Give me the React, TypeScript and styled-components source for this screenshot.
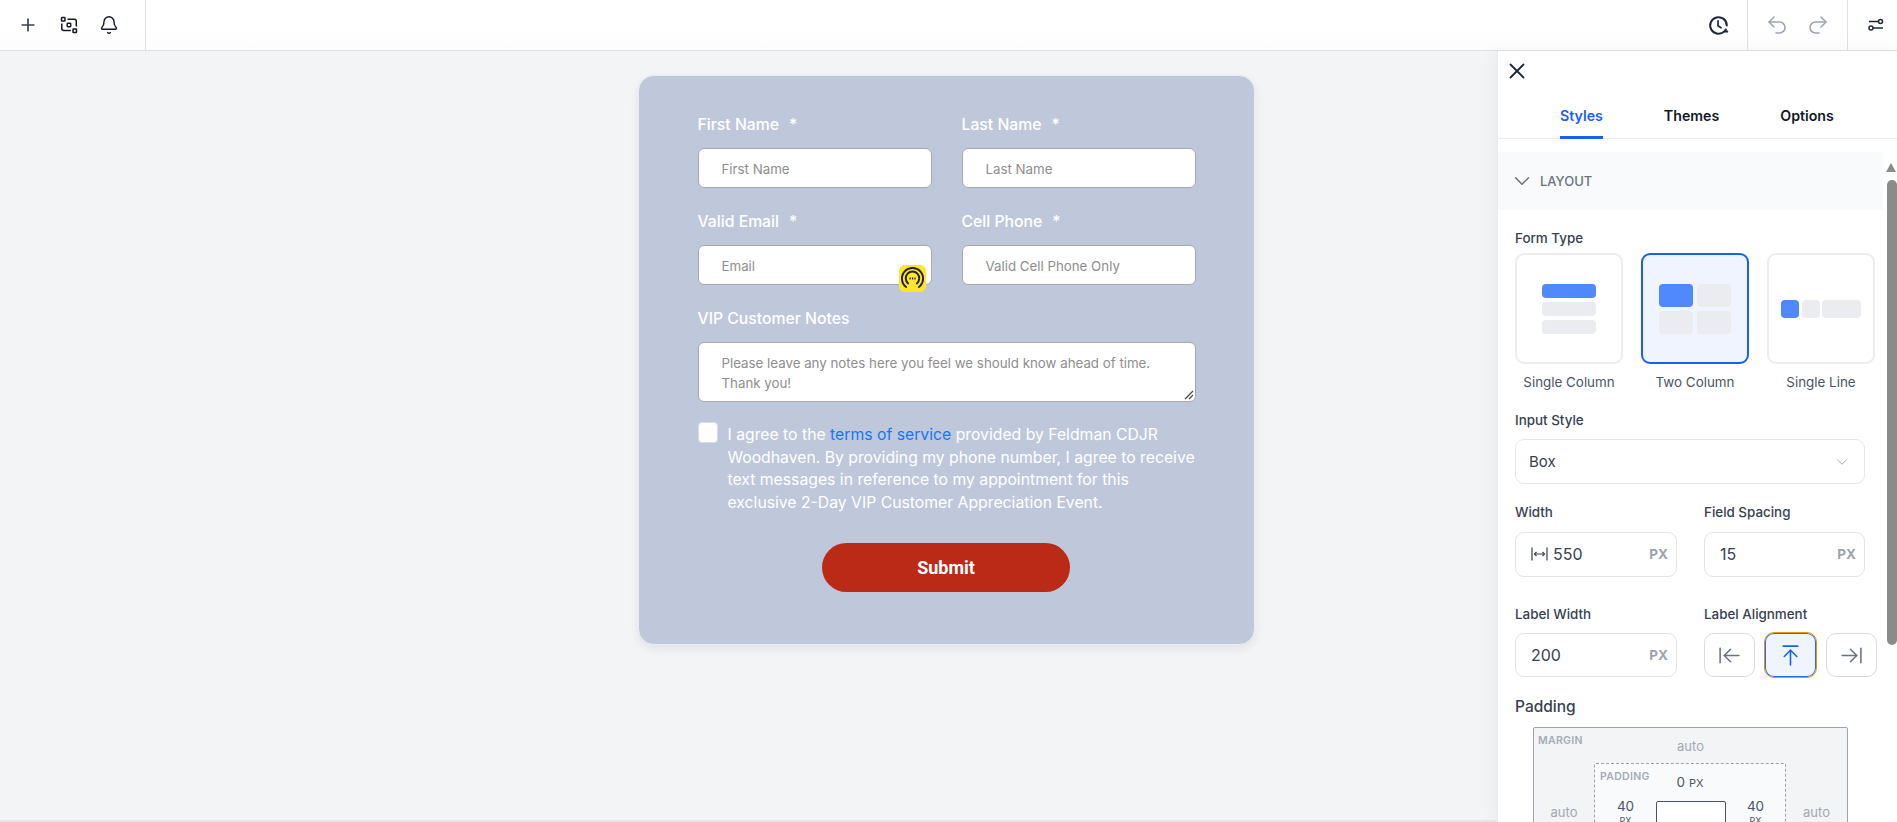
import React from "react";
import styled, { createGlobalStyle } from "styled-components";
import { ArrowLeftToLine, ArrowRightToLine, ArrowUpToLine, Bell, ChevronDown, Plus, Redo2, Undo2, X } from "lucide-react";

const GlobalStyle = createGlobalStyle`
  html, body {
    margin: 0;
    height: 100%;
    overflow: hidden;
    background: #f3f4f6;
    font-family: Inter, "Liberation Sans", sans-serif;
  }
  * { box-sizing: border-box; }
`;

const Page = styled.div`
  height: 822px;
  display: flex;
  flex-direction: column;
  overflow: hidden;
`;

const TopBar = styled.header`
  flex: 0 0 51px;
  display: flex;
  justify-content: space-between;
  background: linear-gradient(#fff, #fff 60%, #fcfcfc);
  border-bottom: 1px solid #dfe0e3;
`;

const BarGroup = styled.div`
  display: flex;
  align-items: center;
`;

const RightTools = styled.div`
  display: flex;
  align-items: stretch;
`;

const LeftTools = styled(BarGroup)`
  width: 146px;
  padding-left: 18px;
  gap: 21.5px;
  border-right: 1px solid #dfe0e3;
  color: #111827;
`;

const HistoryTool = styled(BarGroup)`
  width: 54px;
  padding-right: 18px;
  justify-content: flex-end;
  color: #1f2937;
`;

const UndoTools = styled(BarGroup)`
  width: 101px;
  padding-left: 17px;
  gap: 17px;
  border-left: 1px solid #dfe0e3;
  border-right: 1px solid #dfe0e3;
  color: #9ca3af;
`;

const SettingsTool = styled(BarGroup)`
  width: 49px;
  padding-left: 20px;
  color: #1f2937;
`;

const Workspace = styled.div`
  flex: 1;
  position: relative;
  min-height: 0;
  display: flex;
  justify-content: center;
  align-items: flex-start;
  padding: 24px 5px 0 0;
  border-bottom: 2px solid #e5e7eb;
`;

const FormCard = styled.form`
  width: 617px;
  height: 570px;
  padding: 37px 59px 0;
  background: #bfc7db;
  border: 1px solid #e9ebf1;
  border-radius: 16px;
  box-shadow: 0 4px 10px rgba(30, 40, 70, 0.08);
`;

const FieldRow = styled.div`
  display: grid;
  grid-template-columns: 234px 234px;
  gap: 30px;
  margin-bottom: 22px;
`;

const Field = styled.div`
  position: relative;
`;

const FieldLabel = styled.label`
  display: block;
  height: 24px;
  line-height: 24px;
  margin-bottom: 11px;
  color: #fff;
  font-size: 15.75px;
  font-weight: 500;
`;

const Star = styled.span`
  margin-left: 10px;
`;

const TextInput = styled.div`
  height: 40px;
  padding: 2px 0 0 23px;
  display: flex;
  align-items: center;
  background: #fff;
  border: 1px solid #a6a8ad;
  border-radius: 6px;
  color: #8e8e8e;
  font-size: 13.3px;
`;

const TextAreaBox = styled.div`
  position: relative;
  width: 498px;
  height: 60px;
  padding: 10px 23px;
  background: #fff;
  border: 1px solid #a6a8ad;
  border-radius: 6px;
  color: #8e8e8e;
  font-size: 13.3px;
  line-height: 20px;
`;

const ResizeGrip = styled.svg`
  position: absolute;
  right: 1px;
  bottom: 1px;
`;

const Badge = styled.div`
  position: absolute;
  left: 201px;
  top: 55px;
  width: 27px;
  height: 27px;
  display: flex;
  align-items: center;
  justify-content: center;
  background: #fde62b;
  border-radius: 6px;
`;

const ConsentRow = styled.div`
  display: flex;
  gap: 10px;
  margin-top: 20px;
`;

const Checkbox = styled.span`
  flex: 0 0 20px;
  height: 21px;
  background: #fff;
  border: 1px solid #d9dde8;
  border-radius: 4px;
`;

const ConsentText = styled.p`
  margin: 0;
  flex: 0 0 473px;
  padding-top: 2px;
  color: #fff;
  font-size: 15.75px;
  line-height: 22.7px;
`;

const TermsLink = styled.span`
  color: #1577f5;
`;

const SubmitRow = styled.div`
  display: flex;
  justify-content: center;
  margin-top: 28px;
`;

const SubmitButton = styled.button`
  width: 248px;
  height: 49px;
  border: 0;
  border-radius: 25px;
  background: #bb2917;
  color: #fff;
  font-family: Roboto, sans-serif;
  font-size: 18px;
  font-weight: 700;
`;

const SidePanel = styled.aside`
  position: absolute;
  top: 0;
  right: 0;
  bottom: -2px;
  width: 400px;
  overflow: hidden;
  background: #fff;
  border-left: 1px solid #e9eaee;
  box-shadow: -6px 0 14px rgba(0, 0, 0, 0.03);
`;

const CloseRow = styled.div`
  height: 39px;
  padding: 7px 0 0 6px;
  color: #1f2937;
`;

const Tabs = styled.nav`
  height: 49px;
  padding: 17px 0 0 62px;
  display: flex;
  gap: 61px;
  border-bottom: 1px solid #eceef1;
`;

const Tab = styled.div<{ $active?: boolean }>`
  height: 32px;
  line-height: 18px;
  color: ${(p) => (p.$active ? "#1a5ff0" : "#111827")};
  font-size: 14.2px;
  font-weight: 600;
  border-bottom: ${(p) => (p.$active ? "3px solid #1a5ff0" : "0")};
`;

const ScrollArea = styled.div`
  position: relative;
  margin-top: 13px;
  padding-right: 14px;
`;

const ScrollTrack = styled.div`
  position: absolute;
  top: 0;
  right: 0;
  width: 11px;
  height: 100%;
`;

const ScrollArrow = styled.div`
  margin: 11px 0 0 0;
  width: 0;
  height: 0;
  border-left: 5.5px solid transparent;
  border-right: 5.5px solid transparent;
  border-bottom: 9px solid #8b8b8b;
`;

const ScrollThumb = styled.div`
  width: 10px;
  margin: 8px 0 0 1px;
  height: 465px;
  background: #8b8b8b;
  border-radius: 5px;
`;

const SectionHeader = styled.div`
  height: 58px;
  padding-left: 11px;
  display: flex;
  align-items: center;
  gap: 5px;
  background: #f9fafb;
  color: #6b7280;
  font-size: 13px;
  font-weight: 500;
`;

const SectionBody = styled.div`
  padding: 18px 0 0 17px;
`;

const ControlLabel = styled.div<{ $large?: boolean; $top?: number }>`
  margin-top: ${(p) => p.$top ?? 0}px;
  color: #374151;
  font-size: ${(p) => (p.$large ? 15.5 : 13.4)}px;
  font-weight: 500;
  line-height: 20px;
`;

const TypeRow = styled.div`
  display: grid;
  grid-template-columns: repeat(3, 108px);
  gap: 18px;
  margin-top: 5px;
`;

const TypeOption = styled.div`
  display: flex;
  flex-direction: column;
  align-items: center;
  gap: 9px;
  color: #4b5563;
  font-size: 13.4px;
  line-height: 18px;
`;

const TypeCard = styled.div<{ $active?: boolean }>`
  width: 108px;
  height: 111px;
  display: flex;
  align-items: center;
  justify-content: center;
  background: ${(p) => (p.$active ? "#eff4fe" : "#fff")};
  border: 2px solid ${(p) => (p.$active ? "#1a5ff0" : "#ecedf1")};
  border-radius: 9px;
`;

const SelectBox = styled.div`
  width: 350px;
  height: 45px;
  margin-top: 9px;
  padding: 0 13px;
  display: flex;
  align-items: center;
  justify-content: space-between;
  border: 1px solid #e5e7eb;
  border-radius: 9px;
  color: #374151;
  font-size: 15px;
`;

const TwoCols = styled.div<{ $top: number }>`
  display: grid;
  grid-template-columns: 162px 161px;
  gap: 27px;
  margin-top: ${(p) => p.$top}px;
`;

const NumberInput = styled.div<{ $tight?: boolean }>`
  height: ${(p) => (p.$tight ? 44 : 45)}px;
  margin-top: ${(p) => (p.$tight ? 9 : 10)}px;
  padding: 0 8px 1px 15px;
  display: flex;
  align-items: center;
  justify-content: space-between;
  border: 1px solid #e2e4ea;
  border-radius: 9px;
  color: #374151;
  font-size: 16px;
`;

const InputValue = styled.span`
  display: flex;
  align-items: center;
  gap: 5px;
`;

const Unit = styled.span`
  color: #9ca3af;
  font-size: 13.5px;
  font-weight: 700;
`;

const AlignRow = styled.div`
  display: flex;
  align-items: center;
  gap: 9px;
  margin-top: 8px;
`;

const AlignButton = styled.div<{ $active?: boolean }>`
  flex: 0 0 ${(p) => (p.$active ? 53 : 51)}px;
  height: ${(p) => (p.$active ? 46 : 44)}px;
  display: flex;
  align-items: center;
  justify-content: center;
  background: ${(p) => (p.$active ? "#eff4fe" : "#fff")};
  border: 1px solid ${(p) => (p.$active ? "#e8930c" : "#d9dbe4")};
  box-shadow: ${(p) => (p.$active ? "inset 0 0 0 1px #2a6bf0" : "none")};
  border-radius: 10px;
  color: ${(p) => (p.$active ? "#1a5ff0" : "#6b7280")};
`;

const MarginBox = styled.div`
  width: 315px;
  height: 200px;
  margin: 10px 0 0 18px;
  padding-top: 7px;
  background: #f3f4f6;
  border: 1px solid #9ca3af;
  border-radius: 2px;
`;

const BoxTitle = styled.div<{ $inset: number }>`
  height: 12px;
  padding-left: ${(p) => p.$inset}px;
  line-height: 12px;
  color: #a5abb8;
  font-size: 10.5px;
  font-weight: 600;
  letter-spacing: 0.3px;
`;

const AutoTop = styled.div`
  margin-top: -9px;
  text-align: center;
  color: #a3a8b3;
  font-size: 13px;
  line-height: 16px;
`;

const MarginMiddle = styled.div`
  display: grid;
  grid-template-columns: 60px 192px 61px;
  margin-top: 9px;
`;

const AutoSide = styled.div`
  padding-top: 41px;
  text-align: center;
  color: #a3a8b3;
  font-size: 13px;
  line-height: 16px;
`;

const PaddingBox = styled.div`
  height: 100px;
  padding-top: 7px;
  background: #f9fafb;
  border: 1px dashed #9ca3af;
  border-radius: 2px;
`;

const ZeroValue = styled.div`
  margin-top: -8px;
  text-align: center;
  color: #4b5563;
  font-size: 13.5px;
  line-height: 14px;
  small {
    font-size: 11px;
  }
`;

const PaddingMiddle = styled.div`
  display: grid;
  grid-template-columns: 61px 70px 59px;
  align-items: start;
  margin-top: 8px;
`;

const SideValue = styled.div`
  text-align: center;
  color: #4b5563;
  font-size: 13.5px;
  line-height: 16px;
  small {
    display: block;
    margin-top: 2px;
    font-size: 9px;
    line-height: 10px;
  }
`;

const ContentBox = styled.div`
  height: 24px;
  margin-top: 3px;
  background: #fff;
  border: 1px solid #4b5563;
  border-radius: 2px;
`;

const Shade = styled.rect<{ $on?: boolean }>`
  fill: ${(p) => (p.$on ? "#5089fd" : "#ebecef")};
`;

const GroupIcon = () => (
  <svg width="18" height="18" viewBox="0 0 18 18" fill="none" stroke="currentColor" strokeWidth="1.5">
    <rect x="1.5" y="1.5" width="3.5" height="3.5" rx=".6" />
    <rect x="7.2" y="7.2" width="3.5" height="3.5" rx=".6" />
    <rect x="13" y="13" width="3.5" height="3.5" rx=".6" />
    <path d="M7.5 3.2h6.8a2 2 0 0 1 2 2v5.3M1.8 7.5v5a2 2 0 0 0 2 2h7" />
  </svg>
);

const HistoryIcon = () => (
  <svg width="21" height="21" viewBox="0 0 21 21" fill="none" stroke="currentColor" strokeWidth="2" strokeLinecap="round">
    <path d="M18.8 10.5a8.3 8.3 0 1 0-2.5 5.9" />
    <path d="M10 5.8v5l3 2" strokeWidth="1.7" />
    <path d="M15.4 13.8h4.2l-2.1 3z" fill="currentColor" strokeWidth="1" transform="rotate(180 17.5 15.4)" />
  </svg>
);

const SlidersIcon = () => (
  <svg width="16" height="16" viewBox="0 0 16 16" fill="none" stroke="currentColor" strokeWidth="1.5">
    <circle cx="12.5" cy="4.5" r="2" />
    <circle cx="3" cy="11" r="2" />
    <path d="M1 4.5h9.5M5 11h10" />
  </svg>
);

const WidthIcon = () => (
  <svg width="17" height="16" viewBox="0 0 17 16" fill="none" stroke="#374151" strokeWidth="1.2">
    <path d="M1 1.5v13M16 1.5v13M3.5 8h10" />
    <path d="M5.5 6 3.5 8l2 2M11.5 6l2 2-2 2" />
  </svg>
);

const BadgeIcon = () => (
  <svg width="25" height="25" viewBox="0 0 23 23" fill="none" stroke="#222" strokeWidth="1.8" strokeLinecap="round">
    <path d="M5.7 19.3a9.7 9.7 0 1 1 11.6 0" />
    <path d="M7.5 16a6.2 6.2 0 1 1 8 0" />
    <path d="M8.7 11.5h5.6" strokeDasharray="1.2 1.1" strokeLinecap="butt" />
  </svg>
);

const SingleColumnArt = () => (
  <svg width="56" height="52" viewBox="0 0 56 52">
    <Shade $on x="1" y="1" width="54" height="14" rx="4" />
    <Shade x="1" y="19" width="54" height="14" rx="4" />
    <Shade x="1" y="37" width="54" height="14" rx="4" />
  </svg>
);

const TwoColumnArt = () => (
  <svg width="72" height="50" viewBox="0 0 72 50">
    <Shade $on x="0" y="0" width="34" height="23" rx="4" />
    <Shade x="38" y="0" width="34" height="23" rx="4" />
    <Shade x="0" y="27" width="34" height="23" rx="4" />
    <Shade x="38" y="27" width="34" height="23" rx="4" />
  </svg>
);

const SingleLineArt = () => (
  <svg width="80" height="18" viewBox="0 0 80 18">
    <Shade $on x="0" y="0" width="18" height="18" rx="4" />
    <Shade x="21" y="0" width="18" height="18" rx="4" />
    <Shade x="41" y="0" width="39" height="18" rx="4" />
  </svg>
);

function RequiredLabel({ text }: { text: string }) {
  return <FieldLabel>{text}<Star>*</Star></FieldLabel>;
}

export default function App() {
  return (
    <Page>
      <GlobalStyle />
      <TopBar>
        <LeftTools>
          <Plus size={20} strokeWidth={2} color="#374151" />
          <GroupIcon />
          <Bell size={20} strokeWidth={1.7} />
        </LeftTools>
        <RightTools>
          <HistoryTool><HistoryIcon /></HistoryTool>
          <UndoTools>
            <Undo2 size={24} strokeWidth={1.5} />
            <Redo2 size={24} strokeWidth={1.5} />
          </UndoTools>
          <SettingsTool><SlidersIcon /></SettingsTool>
        </RightTools>
      </TopBar>
      <Workspace>
        <FormCard>
          <FieldRow>
            <Field>
              <RequiredLabel text="First Name" />
              <TextInput>First Name</TextInput>
            </Field>
            <Field>
              <RequiredLabel text="Last Name" />
              <TextInput>Last Name</TextInput>
            </Field>
          </FieldRow>
          <FieldRow>
            <Field>
              <RequiredLabel text="Valid Email" />
              <TextInput>Email</TextInput>
              <Badge><BadgeIcon /></Badge>
            </Field>
            <Field>
              <RequiredLabel text="Cell Phone" />
              <TextInput>Valid Cell Phone Only</TextInput>
            </Field>
          </FieldRow>
          <FieldLabel>VIP Customer Notes</FieldLabel>
          <TextAreaBox>
            Please leave any notes here you feel we should know ahead of time. Thank you!
            <ResizeGrip width="10" height="10" viewBox="0 0 10 10" stroke="#444" strokeWidth="1.2">
              <path d="M1 9 9 1M5 9l4-4" />
            </ResizeGrip>
          </TextAreaBox>
          <ConsentRow>
            <Checkbox />
            <ConsentText>
              I agree to the <TermsLink>terms of service</TermsLink> provided by Feldman CDJR Woodhaven. By providing my phone number, I agree to receive text messages in reference to my appointment for this exclusive 2-Day VIP Customer Appreciation Event.
            </ConsentText>
          </ConsentRow>
          <SubmitRow>
            <SubmitButton type="button">Submit</SubmitButton>
          </SubmitRow>
        </FormCard>
        <SidePanel>
          <CloseRow><X size={26} strokeWidth={1.7} /></CloseRow>
          <Tabs>
            <Tab $active>Styles</Tab>
            <Tab>Themes</Tab>
            <Tab>Options</Tab>
          </Tabs>
          <ScrollArea>
            <ScrollTrack>
              <ScrollArrow />
              <ScrollThumb />
            </ScrollTrack>
            <SectionHeader>
              <ChevronDown size={26} strokeWidth={1.4} />
              LAYOUT
            </SectionHeader>
            <SectionBody>
              <ControlLabel>Form Type</ControlLabel>
              <TypeRow>
                <TypeOption>
                  <TypeCard><SingleColumnArt /></TypeCard>
                  Single Column
                </TypeOption>
                <TypeOption>
                  <TypeCard $active><TwoColumnArt /></TypeCard>
                  Two Column
                </TypeOption>
                <TypeOption>
                  <TypeCard><SingleLineArt /></TypeCard>
                  Single Line
                </TypeOption>
              </TypeRow>
              <ControlLabel $top={19}>Input Style</ControlLabel>
              <SelectBox>
                Box
                <ChevronDown size={18} strokeWidth={1.2} color="#9ca3af" />
              </SelectBox>
              <TwoCols $top={18}>
                <div>
                  <ControlLabel>Width</ControlLabel>
                  <NumberInput>
                    <InputValue><WidthIcon />550</InputValue>
                    <Unit>PX</Unit>
                  </NumberInput>
                </div>
                <div>
                  <ControlLabel>Field Spacing</ControlLabel>
                  <NumberInput>
                    <InputValue>15</InputValue>
                    <Unit>PX</Unit>
                  </NumberInput>
                </div>
              </TwoCols>
              <TwoCols $top={27}>
                <div>
                  <ControlLabel>Label Width</ControlLabel>
                  <NumberInput $tight>
                    <InputValue>200</InputValue>
                    <Unit>PX</Unit>
                  </NumberInput>
                </div>
                <div>
                  <ControlLabel>Label Alignment</ControlLabel>
                  <AlignRow>
                    <AlignButton><ArrowLeftToLine size={25} strokeWidth={1.5} /></AlignButton>
                    <AlignButton $active><ArrowUpToLine size={25} strokeWidth={1.5} /></AlignButton>
                    <AlignButton><ArrowRightToLine size={25} strokeWidth={1.5} /></AlignButton>
                  </AlignRow>
                </div>
              </TwoCols>
              <ControlLabel $large $top={19}>Padding</ControlLabel>
              <MarginBox>
                <BoxTitle $inset={4}>MARGIN</BoxTitle>
                <AutoTop>auto</AutoTop>
                <MarginMiddle>
                  <AutoSide>auto</AutoSide>
                  <PaddingBox>
                    <BoxTitle $inset={5}>PADDING</BoxTitle>
                    <ZeroValue>0 <small>PX</small></ZeroValue>
                    <PaddingMiddle>
                      <SideValue>40<small>PX</small></SideValue>
                      <ContentBox />
                      <SideValue>40<small>PX</small></SideValue>
                    </PaddingMiddle>
                  </PaddingBox>
                  <AutoSide>auto</AutoSide>
                </MarginMiddle>
              </MarginBox>
            </SectionBody>
          </ScrollArea>
        </SidePanel>
      </Workspace>
    </Page>
  );
}
